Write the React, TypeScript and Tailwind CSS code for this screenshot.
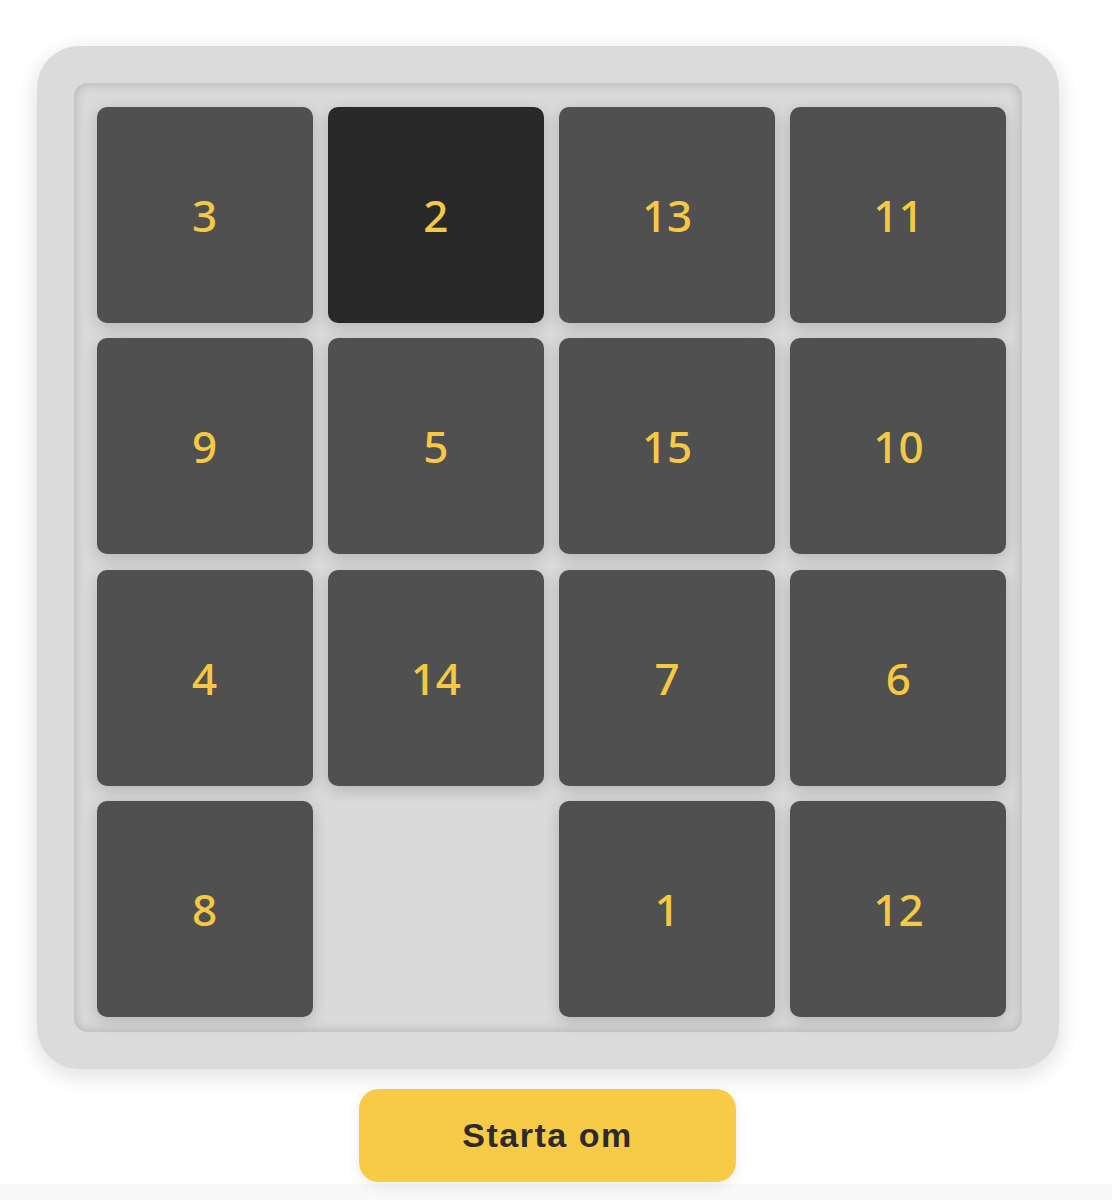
import React from "react";

const tiles: (number | null)[] = [3, 2, 13, 11, 9, 5, 15, 10, 4, 14, 7, 6, 8, null, 1, 12];

function Tile({ value }: { value: number | null }) {
  if (value === null) {
    return <div className="h-[216px] w-[216px] rounded-[10px]" />;
  }
  const dark = value === 2;
  return (
    <div
      className={`flex h-[216px] w-[216px] items-center justify-center rounded-[10px] shadow-[0_4px_16px_rgba(0,0,0,0.18)] ${
        dark ? "bg-[#292929]" : "bg-[#505050]"
      }`}
    >
      <span className="text-[44px] font-medium leading-none text-[#f6c944] [font-family:'Noto_Sans','Open_Sans',sans-serif]">
        {value}
      </span>
    </div>
  );
}

export default function App() {
  return (
    <div className="min-h-screen bg-[#f8f8f8]">
      <div className="flex flex-col items-center bg-white pt-[46px] pr-[17px] pb-[2px]">
        {/* Panel */}
        <div className="rounded-[42px] bg-[#dbdbdb] p-[37px] shadow-[0_6px_22px_rgba(0,0,0,0.14)]">
          {/* Board */}
          <div className="w-[948px] rounded-[14px] bg-[#dadada] pt-[24px] pl-[23px] pr-[15px] pb-[15px] shadow-[inset_0_0_12px_rgba(0,0,0,0.2)]">
            <div className="grid grid-cols-[repeat(4,216px)] gap-[15.3px]">
              {tiles.map((t, i) => (
                <Tile key={i} value={t} />
              ))}
            </div>
          </div>
        </div>

        {/* Restart */}
        <button className="mt-[20px] h-[93px] w-[377px] rounded-[20px] bg-[#f7cb46] text-[34px] font-bold tracking-[1.5px] text-[#2b2b2b] shadow-[0_4px_14px_rgba(0,0,0,0.08)] [font-family:'Liberation_Sans',Arial,sans-serif]">
          Starta om
        </button>
      </div>
    </div>
  );
}
